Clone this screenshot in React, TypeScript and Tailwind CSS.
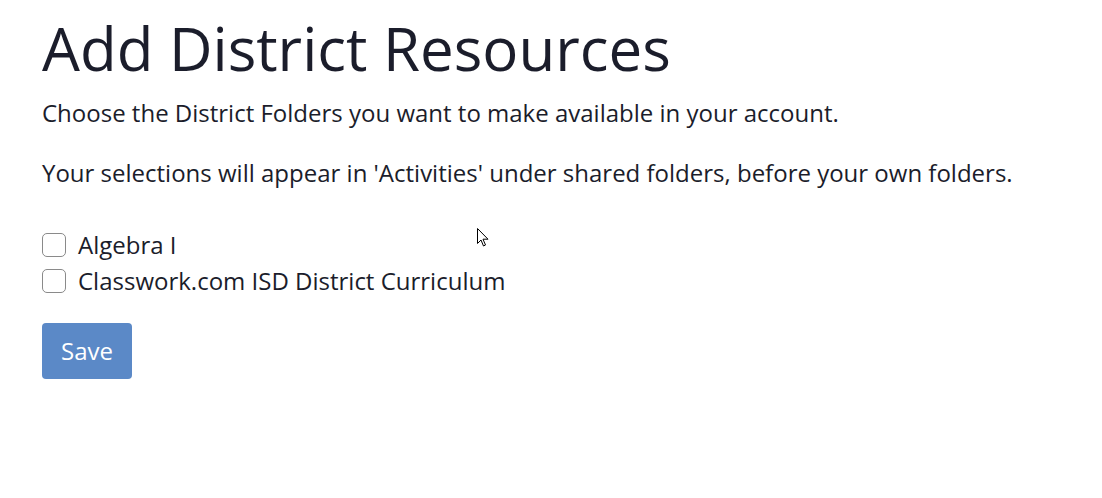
import React from 'react';

const folders = ['Algebra I', 'Classwork.com ISD District Curriculum'];

function Cursor() {
  return (
    <svg
      className="absolute left-[477px] top-[228px]"
      width="13"
      height="20"
      viewBox="0 0 13 20"
    >
      <path
        d="M0.5 0.5 L0.5 15.5 L4 12 L6.5 18 L8.5 17 L6 11.2 L11 11.2 Z"
        fill="#fff"
        stroke="#000"
        strokeWidth="1"
      />
    </svg>
  );
}

export default function App() {
  return (
    <div className="relative min-h-[498px] bg-white px-[42px] pt-[12px] text-[#1b1d2b] font-['Open_Sans',sans-serif]">
      <h1 className="text-[60px] leading-[72px] font-normal">Add District Resources</h1>
      <p className="mt-[13px] text-[24px] leading-[32px]">
        Choose the District Folders you want to make available in your account.
      </p>
      <p className="mt-[28px] text-[24px] leading-[32px]">
        Your selections will appear in 'Activities' under shared folders, before your own folders.
      </p>
      <div className="mt-[40px] flex flex-col gap-[4px]">
        {folders.map((f) => (
          <label key={f} className="flex items-center gap-[12px] text-[24px] leading-[32px]">
            <span className="h-[24px] w-[24px] rounded-[5px] border border-[#8a8a8a] bg-white" />
            {f}
          </label>
        ))}
      </div>
      <button className="mt-[26px] h-[56px] w-[90px] rounded-[4px] bg-[#5b89c7] text-[24px] text-white">
        Save
      </button>
      <Cursor />
    </div>
  );
}
